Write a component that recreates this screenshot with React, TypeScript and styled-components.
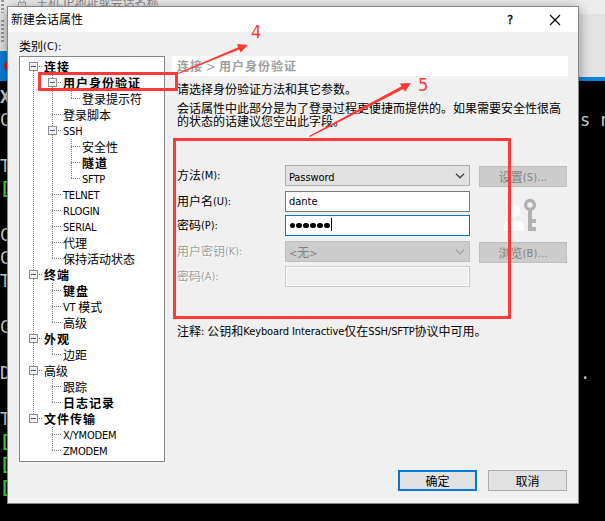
import React from "react";
import styled, { createGlobalStyle, css } from "styled-components";

const RED = "#fd3a37";
const CJK = `"Noto Sans CJK SC", sans-serif`;
const LATIN = `"DejaVu Sans Condensed", "DejaVu Sans", "Noto Sans CJK SC", sans-serif`;

const GlobalStyle = createGlobalStyle`
  * { box-sizing: border-box; }
  body { margin: 0; background: #000; overflow: hidden; }
`;

const Screen = styled.div`
  position: relative;
  width: 605px;
  height: 521px;
  overflow: hidden;
  background: #000;
  font: 12px/16px ${CJK};
  color: #000;
`;

/* ---------- text ---------- */

const Latin = styled.span<{ $track?: number }>`
  font-family: ${LATIN};
  font-size: 11px;
  font-stretch: condensed;
  line-height: 1;
  vertical-align: 1px;
  letter-spacing: ${(p) => p.$track ?? -0.1}px;
`;

function Mixed({ text, track }: { text: string; track?: number }) {
  return (
    <>
      {text.split(/([\x20-\x7e]+)/).map((part, i) =>
        i % 2 ? <Latin key={i} $track={track}>{part}</Latin> : part
      )}
    </>
  );
}

/* ---------- application behind the dialog ---------- */

const Backdrop = styled.div`
  display: flex;
  flex-direction: column;
  height: 521px;
`;

const AddressBar = styled.div`
  display: flex;
  height: 14px;
  padding-left: 1px;
  background: #ededed;
`;

const AddressText = styled.div`
  margin: -6px 0 0 9px;
  color: #8c8c8c;
  white-space: nowrap;
`;

const Grip = styled.div<{ $h: number; $top?: number }>`
  width: 3px;
  height: ${(p) => p.$h}px;
  margin-top: ${(p) => p.$top ?? 0}px;
  background: repeating-linear-gradient(#9a9a9a 0 2px, transparent 2px 4px);
`;

const LockIcon = styled.svg`
  width: 10px;
  height: 8px;
  margin-left: 13px;
`;

const ToolStrip = styled.div`
  display: flex;
  height: 63px;
  padding-left: 1px;
  background: #e3e3e3;
`;

const TabStrip = styled.div`
  display: flex;
  height: 30px;
  margin-top: -26px;
  align-items: center;
  background: linear-gradient(90deg, #0a7fd9 50%, transparent 50%),
    linear-gradient(#e3e3e3 26px, #0a84dc 26px);
`;

const RecordDot = styled.div`
  width: 10px;
  height: 10px;
  margin-left: 4px;
  border-radius: 50%;
  background: #e01212;
`;

const Terminal = styled.div`
  flex: 1;
  padding-top: 5px;
  background: #000;
  color: #d6d6d6;
  font: 17px/23px "DejaVu Sans Mono", monospace;
`;

const TermLine = styled.div<{ $green?: boolean; $bold?: boolean }>`
  display: flex;
  justify-content: space-between;
  height: 23px;
  white-space: pre;
  color: ${(p) => (p.$green ? "#43d843" : "inherit")};
  font-weight: ${(p) => (p.$bold || p.$green ? 700 : 400)};
`;

const TermTail = styled.span`
  width: 25px;
`;

const terminalRows: { head: string; tail?: string; green?: boolean; bold?: boolean }[] = [
  { head: "X", bold: true },
  { head: "C", tail: "s n" },
  { head: "" },
  { head: "T" },
  { head: "[", green: true },
  { head: "" },
  { head: "C" },
  { head: "C" },
  { head: "T" },
  { head: "" },
  { head: "C" },
  { head: "" },
  { head: "D", tail: "." },
  { head: "" },
  { head: "T" },
  { head: "[", green: true },
  { head: "[", green: true },
  { head: "[", green: true },
];

/* ---------- dialog ---------- */

const Dialog = styled.div`
  position: absolute;
  left: 7px;
  top: 6px;
  width: 572px;
  height: 498px;
  display: flex;
  flex-direction: column;
  border: 1px solid #858585;
  background: #f0f0f0;
  box-shadow: 0 2px 12px rgba(0, 0, 0, 0.4);
`;

const TitleBar = styled.div`
  display: flex;
  align-items: center;
  height: 25px;
  padding: 0 17px 0 3px;
  background: #fff;
`;

const Title = styled.div`
  flex: 1;
  padding-bottom: 1px;
`;

const HelpMark = styled.div`
  width: 10px;
  margin-right: 32px;
  font: 400 13px/16px ${LATIN};
  font-stretch: condensed;
  -webkit-text-stroke: 0.3px #000;
`;

const CloseIcon = styled.svg`
  width: 12px;
  height: 12px;
`;

const Body = styled.div`
  display: grid;
  grid-template-columns: 146px 396px;
  column-gap: 7px;
  padding: 6px 0 0 11px;
  height: 429px;
`;

const Column = styled.div`
  display: flex;
  flex-direction: column;
`;

const CategoryLabel = styled.div`
  height: 18px;
`;

const Tree = styled.div`
  height: 406px;
  padding: 2px 0 0 4px;
  border: 1px solid #828790;
  background: #fff;
`;

const TreeRow = styled.div`
  display: flex;
  height: 16px;
  white-space: nowrap;
`;

const Guide = styled.svg`
  flex: none;
  width: 19px;
  height: 16px;
`;

const TreeText = styled.span<{ $bold?: boolean; $selected?: boolean }>`
  height: 16px;
  padding-left: 1px;
  line-height: 15px;
  ${(p) => p.$bold && css`
    font-weight: 700;
    letter-spacing: 1px;
  `}
  background: ${(p) => (p.$selected ? "#f0f0f0" : "transparent")};
`;

const Heading = styled.div`
  height: 20px;
  margin-top: 18px;
  padding-left: 5px;
  background: #fff;
  color: #a0a0a0;
  font-weight: 700;
  line-height: 20px;
  letter-spacing: 1px;
`;

const HeadingArrow = styled.span`
  display: inline-block;
  width: 16px;
  padding-left: 3px;
  font: 400 13px/1 ${LATIN};
  font-stretch: condensed;
`;

const Intro = styled.div`
  margin: 5px 0 0 5px;
`;

const Detail = styled.div`
  width: 386px;
  margin: 4px 0 0 5px;
  line-height: 13px;
  white-space: nowrap;
`;

const Form = styled.div`
  display: grid;
  grid-template-columns: 108px 185px 88px;
  grid-template-rows: 26px 24px 26px 25px 21px;
  margin: 38px 0 0 5px;
`;

const FieldLabel = styled.div<{ $off?: boolean }>`
  line-height: 20px;
  color: ${(p) => (p.$off ? "#a0a0a0" : "#000")};
  text-shadow: ${(p) => (p.$off ? "1px 1px 0 #fff" : "none")};
`;

type FieldKind = "select" | "selectOff" | "input" | "focus" | "inputOff";

const fieldLook: Record<FieldKind, ReturnType<typeof css>> = {
  select: css`border: 1px solid #adadad; background: #e1e1e1;`,
  selectOff: css`border: 1px solid #bfbfbf; background: #ccc; color: #838383;`,
  input: css`border: 1px solid #7a7a7a; background: #fff;`,
  focus: css`border: 1px solid #0078d7; background: #fff;`,
  inputOff: css`border: 1px solid #ccc; background: #f0f0f0; box-shadow: inset 0 0 0 1px #fff;`,
};

const Field = styled.div<{ $kind: FieldKind }>`
  display: flex;
  align-items: center;
  height: 21px;
  padding: 0 4px 0 3px;
  ${(p) => fieldLook[p.$kind]}
`;

const FieldValue = styled.span`
  flex: 1;
  ${Latin} {
    vertical-align: 0;
  }
`;

const Chevron = styled.svg`
  width: 10px;
  height: 6px;
`;

const Dots = styled.div`
  display: flex;
  gap: 1.6px;
  padding: 0 1px 0 0.5px;
`;

const Dot = styled.span`
  width: 5.4px;
  height: 5.4px;
  border-radius: 50%;
  background: #000;
`;

const Caret = styled.span`
  width: 1px;
  height: 13px;
  margin-top: -2px;
  background: #000;
`;

const Side = styled.div`
  grid-column: 3;
  grid-row: 1 / span 5;
  display: flex;
  flex-direction: column;
  align-items: flex-start;
  margin: 1px 0 0 9px;
  width: 88px;
`;

const Button = styled.div<{ $look?: "off" | "primary"; $w: number }>`
  display: flex;
  justify-content: center;
  align-items: center;
  width: ${(p) => p.$w}px;
  height: 21px;
  border: 1px solid #adadad;
  background: #e1e1e1;
  ${(p) => p.$look === "off" && css`
    border-color: #bfbfbf;
    background: #ccc;
    color: #838383;
  `}
  ${(p) => p.$look === "primary" && css`
    border: 2px solid #0078d7;
  `}
`;

const UserKeyIcon = styled.svg`
  width: 32px;
  height: 32px;
  margin: 12px 0 11px 25px;
`;

const Note = styled.div`
  margin: 36px 0 0 5px;
  white-space: nowrap;
`;

const Footer = styled.div`
  display: flex;
  justify-content: flex-end;
  gap: 11px;
  padding: 9px 11px 0 0;
`;

/* ---------- annotations ---------- */

const MarkBox = styled.div<{ $x: number; $y: number; $w: number; $h: number }>`
  position: absolute;
  left: ${(p) => p.$x}px;
  top: ${(p) => p.$y}px;
  width: ${(p) => p.$w}px;
  height: ${(p) => p.$h}px;
  border: 3px solid ${RED};
`;

const Arrows = styled.svg`
  position: absolute;
  left: 0;
  top: 0;
  width: 605px;
  height: 521px;
`;

const MarkNumber = styled.div<{ $x: number; $y: number }>`
  position: absolute;
  left: ${(p) => p.$x}px;
  top: ${(p) => p.$y}px;
  color: ${RED};
  font: 18px/20px ${LATIN};
  font-stretch: condensed;
`;

/* ---------- tree data ---------- */

type Node = { text: string; bold?: boolean; selected?: boolean; children?: Node[] };

const tree: Node[] = [
  {
    text: "连接",
    bold: true,
    children: [
      { text: "用户身份验证", bold: true, selected: true, children: [{ text: "登录提示符" }] },
      { text: "登录脚本" },
      { text: "SSH", children: [{ text: "安全性" }, { text: "隧道", bold: true }, { text: "SFTP" }] },
      { text: "TELNET" },
      { text: "RLOGIN" },
      { text: "SERIAL" },
      { text: "代理" },
      { text: "保持活动状态" },
    ],
  },
  { text: "终端", bold: true, children: [{ text: "键盘", bold: true }, { text: "VT 模式" }, { text: "高级" }] },
  { text: "外观", bold: true, children: [{ text: "边距" }] },
  { text: "高级", children: [{ text: "跟踪" }, { text: "日志记录", bold: true }] },
  { text: "文件传输", bold: true, children: [{ text: "X/YMODEM" }, { text: "ZMODEM" }] },
];

type GuideProps = { up?: boolean; down?: boolean; across?: boolean; box?: boolean };

function TreeGuide({ up, down, across, box }: GuideProps) {
  return (
    <Guide viewBox="0 0 19 16" shapeRendering="crispEdges">
      <g stroke="#808080" strokeDasharray="1 1" fill="none">
        {up && <path d="M9.5 0V8" />}
        {down && <path d="M9.5 8V16" />}
        {across && <path d="M9 7.5H19" />}
      </g>
      {box && (
        <g>
          <rect x="5.5" y="3.5" width="8" height="8" rx="1" fill="#f4f4f4" stroke="#919191" />
          <path d="M7 7.5H12" stroke="#3b5ba8" />
        </g>
      )}
    </Guide>
  );
}

function Branch({ nodes, trail }: { nodes: Node[]; trail: boolean[] }) {
  return (
    <>
      {nodes.map((n, i) => {
        const last = i === nodes.length - 1;
        const first = i === 0 && trail.length === 0;
        return (
          <React.Fragment key={i}>
            <TreeRow>
              {trail.map((open, k) => (
                <TreeGuide key={k} up={open} down={open} />
              ))}
              <TreeGuide up={!first} down={!last} across box={!!n.children} />
              <TreeText $bold={n.bold} $selected={n.selected}>
                <Mixed text={n.text} track={-0.2} />
              </TreeText>
            </TreeRow>
            {n.children && <Branch nodes={n.children} trail={[...trail, !last]} />}
          </React.Fragment>
        );
      })}
    </>
  );
}

function DropMark({ color }: { color: string }) {
  return (
    <Chevron viewBox="0 0 10 6">
      <path d="M1 0.8L5 4.8L9 0.8" fill="none" stroke={color} strokeWidth="1.3" />
    </Chevron>
  );
}

export default function App() {
  return (
    <Screen>
      <GlobalStyle />
      <Backdrop>
        <AddressBar>
          <Grip $h={13} />
          <LockIcon viewBox="0 0 10 8">
            <path d="M1.5 2.5H8.5V6.5H1.5ZM3 2V0M7 2V0M5 4V5.5" fill="none" stroke="#a4a4a4" />
          </LockIcon>
          <AddressText>主机,IP地址或会话名称</AddressText>
        </AddressBar>
        <ToolStrip>
          <Grip $h={23} $top={6} />
        </ToolStrip>
        <TabStrip>
          <RecordDot />
        </TabStrip>
        <Terminal>
          {terminalRows.map((r, i) => (
            <TermLine key={i} $green={r.green} $bold={r.bold}>
              <span>{r.head}</span>
              <TermTail>{r.tail}</TermTail>
            </TermLine>
          ))}
        </Terminal>
      </Backdrop>

      <Dialog>
        <TitleBar>
          <Title>新建会话属性</Title>
          <HelpMark>?</HelpMark>
          <CloseIcon viewBox="0 0 12 12">
            <path d="M1 1L11 11M11 1L1 11" stroke="#000" strokeWidth="1.1" />
          </CloseIcon>
        </TitleBar>
        <Body>
          <Column>
            <CategoryLabel><Mixed text="类别(C):" track={0.1} /></CategoryLabel>
            <Tree>
              <Branch nodes={tree} trail={[]} />
            </Tree>
          </Column>
          <Column>
            <Heading>连接<HeadingArrow>&gt;</HeadingArrow>用户身份验证</Heading>
            <Intro>请选择身份验证方法和其它参数。</Intro>
            <Detail>
              会话属性中此部分是为了登录过程更便捷而提供的。如果需要安全性很高
              <br />
              的状态的话建议您空出此字段。
            </Detail>
            <Form>
              <FieldLabel><Mixed text="方法(M):" /></FieldLabel>
              <Field $kind="select">
                <FieldValue><Mixed text="Password" /></FieldValue>
                <DropMark color="#404040" />
              </Field>
              <Side>
                <Button $look="off" $w={88}><span><Mixed text="设置(S)..." track={0.2} /></span></Button>
                <UserKeyIcon viewBox="0 0 32 32">
                  <circle cx="10" cy="12" r="6.3" fill="#fcfcfc" />
                  <path d="M0 32V27Q1 22 5 22H15Q19 22 20 27V32Z" fill="#fcfcfc" />
                  <circle cx="26" cy="6" r="4.4" fill="none" stroke="#b1b1b1" strokeWidth="3.4" />
                  <path d="M24 11H28V20H32V24H28V28H32V32H24Z" fill="#b1b1b1" />
                </UserKeyIcon>
                <Button $look="off" $w={88}><span><Mixed text="浏览(B)..." track={0.2} /></span></Button>
              </Side>
              <FieldLabel><Mixed text="用户名(U):" /></FieldLabel>
              <Field $kind="input"><Mixed text="dante" track={0} /></Field>
              <FieldLabel><Mixed text="密码(P):" /></FieldLabel>
              <Field $kind="focus">
                <Dots>
                  {Array.from({ length: 6 }, (_, i) => <Dot key={i} />)}
                </Dots>
                <Caret />
              </Field>
              <FieldLabel $off><Mixed text="用户密钥(K):" /></FieldLabel>
              <Field $kind="selectOff">
                <FieldValue><Mixed text="<无>" /></FieldValue>
                <DropMark color="#a3a3a3" />
              </Field>
              <FieldLabel $off><Mixed text="密码(A):" /></FieldLabel>
              <Field $kind="inputOff" />
            </Form>
            <Note><Mixed text="注释: 公钥和Keyboard Interactive仅在SSH/SFTP协议中可用。" /></Note>
          </Column>
        </Body>
        <Footer>
          <Button $look="primary" $w={79}>确定</Button>
          <Button $w={79}>取消</Button>
        </Footer>
      </Dialog>

      <MarkBox $x={38} $y={72} $w={140} $h={19} />
      <MarkBox $x={173} $y={138} $w={338} $h={181} />
      <Arrows viewBox="0 0 605 521" fill={RED}>
        <path d="M178 73L238.2 47.2L237 44L248 45L240.5 52.5L239.2 49.6L178.5 74Z" />
        <path d="M309 136L401.5 86.3L399.7 83.5L411 83L405 91.7L403.3 89L310 137Z" />
      </Arrows>
      <MarkNumber $x={251} $y={22}>4</MarkNumber>
      <MarkNumber $x={418} $y={75}>5</MarkNumber>
    </Screen>
  );
}
